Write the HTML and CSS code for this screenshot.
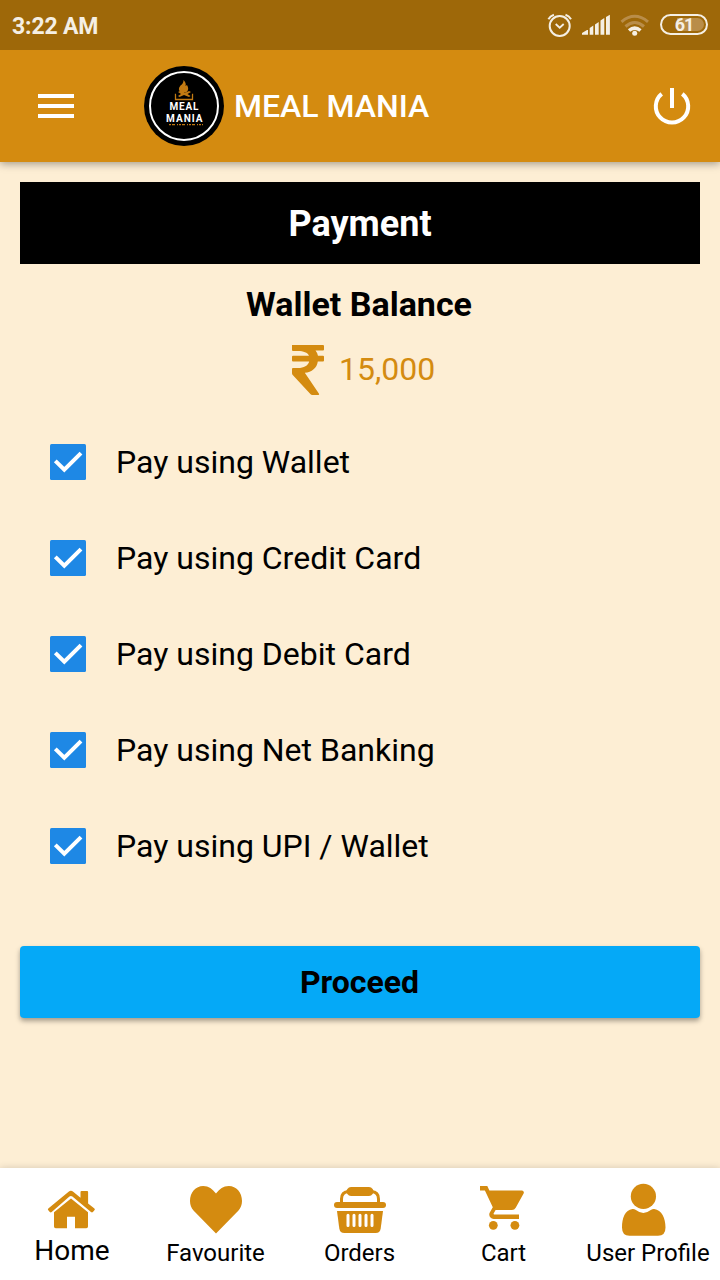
FILE: index.html
```html
<!DOCTYPE html>
<html lang="en">
<head>
<meta charset="utf-8">
<title>Meal Mania</title>
<link rel="stylesheet" href="styles.css">
</head>
<body>
<div class="status">
  <span class="time">3:22 AM</span>
  <svg class="indicators" width="166" height="50" viewBox="545 0 166 50">
    <g fill="none" stroke="#f5efe4" stroke-width="2">
      <circle cx="559.7" cy="26" r="10"/>
      <path d="M555.7 24l4 3.7 4-3.7" stroke-width="1.8"/>
      <path d="M548.4 19.3q1.8-3.3 5.5-4.6M571 19.3q-1.8-3.3-5.500-4.600"/>
    </g>
    <path fill="#f5efe4" d="M582 34.700v-1.700l5-3h1v4.700zM589.700 34.700V28l3.600-2.500v9.200zM595 34.700V24.500l3.700-2.500v12.700zM600.500 34.700V20.500l3.800-2.500v16.700zM606 34.700V17l3.900-2.300v20z"/>
    <g fill="none" stroke="#b98d49" stroke-width="3">
      <path d="M621.500 21.800q13.200-11 26.500 0"/>
      <path d="M625.500 26.500q9.200-8 18.500 0"/>
    </g>
    <path d="M629 30.500q5.700-4.800 11.500 0" fill="none" stroke="#f5efe4" stroke-width="3.500"/>
    <circle cx="634.700" cy="33.200" r="2.500" fill="#f5efe4"/>
    <path d="M677 18h20.500a6.500 6.500 0 010 13H677z" fill="#b98d49"/>
    <rect x="661" y="15" width="46" height="19" rx="9.500" fill="none" stroke="#f5efe4" stroke-width="2"/>
    <text x="684" y="31" class="battery">61</text>
  </svg>
</div>
<header class="bar">
  <svg class="menu" width="36" height="24" viewBox="0 0 36 24"><path fill="#fff" d="M0 0h36v4H0zM0 10h36v4H0zM0 20h36v4H0z"/></svg>
  <svg class="logo" width="80" height="80" viewBox="0 0 80 80">
    <circle cx="40" cy="40" r="40"/>
    <circle cx="40" cy="40" r="34" fill="none" stroke="#fff" stroke-width="2"/>
    <path fill="#c27a12" d="M39.500 14q3 3 2 6l1.500-1q3 5-1 7.500h-5q-4-3-.5-7 3-2 3-5.500zM34 26l2-1 5 2 4-2 2 1-3.500 2 3 2-1.500 1-5-2-4.500 2-1.500-1 3-2z"/>
    <path fill="none" stroke="#c27a12" stroke-width="1.300" d="M32 28.500h-.5v5h17v-5H48"/>
    <text x="25.500" y="44" textLength="29" class="logo-text">MEAL</text>
    <text x="22" y="56" textLength="36.500" class="logo-text">MANIA</text>
    <path stroke="#c27a12" stroke-width="1.200" stroke-dasharray="2 1 3 2 1 1" d="M25 58.700h34"/>
  </svg>
  <h1 class="brand">MEAL MANIA</h1>
  <svg class="power" width="40" height="40" viewBox="652 86 40 40"><path fill="none" stroke="#fff" stroke-width="4" d="M672 88v20M661.700 93.900a16.200 16.200 0 1020.600 0"/></svg>
</header>
<main class="content">
  <h2 class="heading">Payment</h2>
  <h3 class="balance-title">Wallet Balance</h3>
  <div class="balance">
    <svg width="36" height="52" viewBox="0 0 36 52"><path fill="#d48b10" d="M2 1h31q1 0 1 1v3.500q0 1-1 1h-7.500q2 2.500 2.500 5.200h5q1 0 1 1v3.800q0 1-1 1h-5.200c-.8 6.500-6 10.700-13 11.300L29 49.700q.7 1.300-.8 1.300h-6q-1 0-1.600-.7L2.500 30.700Q2 30 2 29v-4q0-1 1-1h5c6 0 10-2.200 11.200-6.500H3q-1 0-1-1v-3.800q0-1 1-1h16C17.500 8.500 13.500 7 8 7H3Q2 7 2 6z"/></svg>
    <span class="amount">15,000</span>
  </div>
  <ul class="options">
    <li class="option"><svg class="check" width="36" height="36" viewBox="0 0 36 36"><rect width="36" height="36" rx="1.500" fill="#1e88e5"/><path class="tick" d="M5.300 16.900l9 8.800L31 9.200"/></svg><span>Pay using Wallet</span></li>
    <li class="option"><svg class="check" width="36" height="36" viewBox="0 0 36 36"><rect width="36" height="36" rx="1.500" fill="#1e88e5"/><path class="tick" d="M5.300 16.900l9 8.800L31 9.200"/></svg><span>Pay using Credit Card</span></li>
    <li class="option"><svg class="check" width="36" height="36" viewBox="0 0 36 36"><rect width="36" height="36" rx="1.500" fill="#1e88e5"/><path class="tick" d="M5.300 16.900l9 8.800L31 9.200"/></svg><span>Pay using Debit Card</span></li>
    <li class="option"><svg class="check" width="36" height="36" viewBox="0 0 36 36"><rect width="36" height="36" rx="1.500" fill="#1e88e5"/><path class="tick" d="M5.300 16.900l9 8.800L31 9.200"/></svg><span>Pay using Net Banking</span></li>
    <li class="option"><svg class="check" width="36" height="36" viewBox="0 0 36 36"><rect width="36" height="36" rx="1.500" fill="#1e88e5"/><path class="tick" d="M5.300 16.900l9 8.800L31 9.200"/></svg><span>Pay using UPI / Wallet</span></li>
  </ul>
  <button class="proceed">Proceed</button>
</main>
<nav class="tabs">
  <a class="tab home">
    <svg width="60" height="56" viewBox="42 1182 60 56"><path d="M48.300 1210.200q-.9-.9 0-1.800l20.300-16.700q2.300-1.700 4.600 0l7.300 6v-5.700q0-1 1-1h5.600q1 0 1 1v11.500l6.300 5q1 .9 0 1.800l-1.500 1.700q-.9.900-1.900 0l-18.600-15.400q-1.500-1-3 0L51.700 1212q-1 .9-1.900 0z"/><path d="M54 1212.300l17-13.800 17 13.800v14.200q0 1.700-1.700 1.700H75v-11.500h-8v11.500H55.700q-1.700 0-1.700-1.700z"/></svg>
    <span>Home</span>
  </a>
  <a class="tab">
    <svg width="60" height="56" viewBox="186 1182 60 56"><path d="M216 1233.500l-22.500-23c-2.200-2.500-3.500-5.500-3.500-9.500 0-8.500 5.700-15 13.200-15 5.500 0 9.300 3 12.800 7.500 3.500-4.500 7.300-7.500 12.800-7.500 7.500 0 13.200 6.500 13.200 15 0 4-1.300 7-3.500 9.500z"/></svg>
    <span>Favourite</span>
  </a>
  <a class="tab">
    <svg width="60" height="56" viewBox="330 1182 60 56"><path d="M341.500 1204v-5q0-7.300 7-7.300h23q7 0 7 7.300v5" fill="none" stroke="#d48b10" stroke-width="3"/><path d="M351 1187h18q2.300 0 3.600 2l1.400 2.300-1.400 2.700q-1.300 2-3.600 2h-18q-2.300 0-3.600-2l-1.400-2.700 1.400-2.300q1.300-2 3.600-2z"/><rect x="334" y="1202" width="52" height="6" rx="3"/><path d="M337 1211h46l-2.300 17.500q-.7 4.500-5 4.500h-31.400q-4.300 0-5-4.500z"/><path d="M348 1215.200v10.300M354 1215.200v10.300M360 1215.200v10.300M366 1215.200v10.300M372 1215.200v10.300" stroke="#fff" stroke-width="3" stroke-linecap="round"/></svg>
    <span>Orders</span>
  </a>
  <a class="tab">
    <svg width="60" height="56" viewBox="474 1182 60 56"><path d="M480 1186h7.300l2.100 4.400h32.300a2.200 2.200 0 011.900 3.200l-7.900 14.200a4.400 4.400 0 01-3.800 2.200h-16.300l-2 3.600c-.1.500.1.900.6.900H519v4.500h-25.400c-3.300 0-5.400-3.600-3.800-6.500l3-5.300-7.900-16.700H480z"/><circle cx="493.300" cy="1225.300" r="4.400"/><circle cx="514.900" cy="1225.300" r="4.400"/></svg>
    <span>Cart</span>
  </a>
  <a class="tab profile">
    <svg width="60" height="56" viewBox="618 1182 60 56"><circle cx="643.400" cy="1196.400" r="12.600"/><path d="M632.500 1209q1.700-.2 3 .8 7.800 6.200 15.700 0 1.300-1 3-.8c7.500.8 11.300 9 11.300 18.500q0 8.300-7.500 8.300h-28.500q-7.500 0-7.500-8.300c0-9.500 3-17.700 10.500-18.500z"/></svg>
    <span>User Profile</span>
  </a>
</nav>
</body>
</html>
```
FILE: styles.css
```css
* { box-sizing: border-box; margin: 0; padding: 0; }
body {
  width: 720px;
  height: 1280px;
  display: flex;
  flex-direction: column;
  overflow: hidden;
  background: #fdeed4;
  color: #000;
  font-family: Roboto, "Liberation Sans", sans-serif;
}
svg { display: block; flex: none; }
.status {
  position: relative;
  z-index: 1;
  height: 50px;
  display: flex;
  align-items: center;
  justify-content: space-between;
  padding: 2px 9px 0 12px;
  background: #9e6809;
}
.indicators { margin-top: -2px; }
.time { color: #f5efe4; font-size: 23px; font-weight: 700; letter-spacing: -.15px; }
.battery { fill: #f5efe4; font-size: 18px; font-weight: 700; text-anchor: middle; letter-spacing: -1px; }
.bar {
  height: 112px;
  display: flex;
  align-items: center;
  padding: 0 28px 0 38px;
  background: #d48b10;
  box-shadow: 0 2px 8px rgba(0, 0, 0, .35);
}
.logo { margin-left: 70px; }
.logo-text { fill: #fff; font-size: 10px; font-weight: 700; }
.brand { flex: 1; margin-left: 10px; color: #fff; font-size: 32px; font-weight: 500; }
.content {
  flex: 1;
  display: flex;
  flex-direction: column;
  padding: 20px 20px 0;
}
.heading {
  height: 82px;
  background: #000;
  color: #fff;
  font-size: 36px;
  font-weight: 700;
  line-height: 84px;
  text-align: center;
}
.balance-title { height: 80px; font-size: 34px; font-weight: 700; line-height: 80px; text-align: center; padding-right: 2px; }
.balance { height: 52px; display: flex; align-items: center; gap: 13px; padding-left: 270px; }
.amount { color: #d48b10; font-size: 32px; padding-bottom: 2px; }
.options { margin-top: 18px; list-style: none; }
.option { height: 96px; display: flex; align-items: center; gap: 30px; padding-left: 30px; font-size: 32px; }
.tick { fill: none; stroke: #fff; stroke-width: 4px; }
.proceed {
  height: 72px;
  flex: none;
  margin-top: 52px;
  padding-right: 1px;
  border: 0;
  border-radius: 4px;
  background: #05a9f7;
  box-shadow: 0 3px 5px rgba(0, 0, 0, .35);
  color: #000;
  font: 700 32px/72px Roboto, sans-serif;
}
.tabs {
  height: 112px;
  display: grid;
  grid-template-columns: repeat(5, 1fr);
  padding-top: 14px;
  background: #fff;
  box-shadow: 0 0 7px rgba(0, 0, 0, .16);
}
.tab { display: flex; flex-direction: column; align-items: center; font-size: 24px; line-height: 30px; white-space: nowrap; }
.tab svg { fill: #d48b10; }
.tab span { padding-right: 1px; }
.tab.profile span, .tab.home span { padding-right: 0; }
.tab.home { font-size: 28px; line-height: 26px; }
```
